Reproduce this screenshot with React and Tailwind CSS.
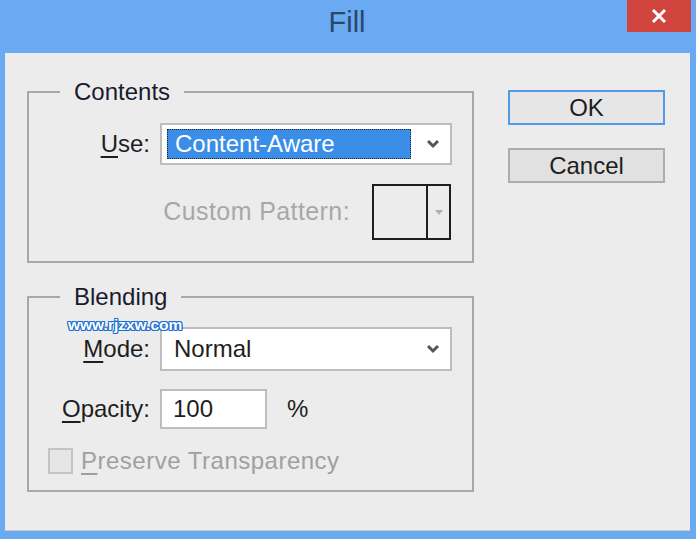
import React from "react";

const font = { fontFamily: '"Liberation Sans", Arial, sans-serif' };

function Chevron({ color = "#555" }) {
  return (
    <svg width="14" height="10" viewBox="0 0 14 10" className="shrink-0">
      <path d="M2 2 L7 7 L12 2" fill="none" stroke={color} strokeWidth="3" />
    </svg>
  );
}

export default function App() {
  return (
    <div
      className="w-[696px] h-[539px] bg-[#6aaaf2] flex flex-col overflow-hidden text-[#1e1e1e]"
      style={font}
    >
      {/* title bar */}
      <div className="relative h-[53px] shrink-0 flex items-center justify-center">
        <span className="text-[29px] text-[#2b4767] -mt-[8px] ml-[-2px]">Fill</span>
        <div className="absolute top-0 right-[5px] w-[64px] h-[32px] bg-[#d0463f] flex items-center justify-center">
          <svg width="16" height="16" viewBox="0 0 16 16">
            <path d="M2 2 L14 14 M14 2 L2 14" stroke="#fff" strokeWidth="3" />
          </svg>
        </div>
      </div>

      {/* client area */}
      <div className="ml-[5px] mr-[6px] h-[478px] bg-[#ececec] border-b border-[#c8c8c8] flex pl-[22px] pt-[27px] text-[24px]">
        <div className="w-[447px] flex flex-col">
          <fieldset className="border-2 border-[#a8a8a8] h-[183px] pt-[19px]">
            <legend className="ml-[31px] px-[14px] leading-[24px] text-[#1a1a2e]">Contents</legend>
            <div className="flex items-center h-[42px]">
              <span className="w-[121px] text-right">
                <span className="underline underline-offset-4">U</span>se:
              </span>
              <div className="ml-[10px] w-[292px] h-[42px] bg-white border-2 border-[#bdbdbd] flex items-center pl-[5px] pr-[10px]">
                <div className="w-[244px] h-[30px] bg-[#3a8ee8] border border-dotted border-[#222] text-white flex items-center pl-[7px]">
                  Content-Aware
                </div>
                <div className="flex-1" />
                <Chevron />
              </div>
            </div>
            <div className="flex items-center mt-[19px]">
              <span className="w-[321px] text-right text-[#a8a8a8] text-[25px] tracking-[0.4px]">Custom Pattern:</span>
              <div className="ml-[22px] w-[79px] h-[56px] border-2 border-[#1e1e1e] flex">
                <div className="w-[54px] border-r-2 border-[#1e1e1e]" />
                <div className="flex-1 flex items-center justify-center">
                  <svg width="8" height="5" viewBox="0 0 8 5">
                    <path d="M0 0 L8 0 L4 5 Z" fill="#b0b0b0" />
                  </svg>
                </div>
              </div>
            </div>
          </fieldset>

          <fieldset className="relative border-2 border-[#a8a8a8] h-[207px] mt-[22px] pt-[18px]">
            <legend className="ml-[31px] px-[14px] leading-[24px] text-[#1a1a2e]">Blending</legend>
            <span
              className="absolute left-[39px] top-[7px] text-[15.5px] leading-[18px] font-bold text-white"
              style={{
                fontFamily: '"Liberation Sans", Arial, sans-serif',
                textShadow:
                  "1px 0 0 #1c6fd1, -1px 0 0 #1c6fd1, 0 1px 0 #1c6fd1, 0 -1px 0 #1c6fd1, 1px 1px 0 #1c6fd1, -1px -1px 0 #1c6fd1, 1px -1px 0 #1c6fd1, -1px 1px 0 #1c6fd1",
              }}
            >
              www.rjzxw.com
            </span>
            <div className="flex items-center h-[44px]">
              <span className="w-[121px] text-right">
                <span className="underline underline-offset-4">M</span>ode:
              </span>
              <div className="ml-[10px] w-[292px] h-[44px] bg-white border-2 border-[#bdbdbd] flex items-center pl-[12px] pr-[10px]">
                <span>Normal</span>
                <div className="flex-1" />
                <Chevron />
              </div>
            </div>
            <div className="flex items-center mt-[18px]">
              <span className="w-[121px] text-right">
                <span className="underline underline-offset-4">O</span>pacity:
              </span>
              <div className="ml-[10px] w-[107px] h-[40px] bg-white border-2 border-[#bdbdbd] flex items-center pl-[11px]">
                100
              </div>
              <span className="ml-[20px]">%</span>
            </div>
            <div className="flex items-center mt-[14px] ml-[19px]">
              <div className="w-[25px] h-[26px] border-2 border-[#c4c4c4] bg-[#e6e6e6]" />
              <span className="ml-[8px] text-[#a0a0a0] tracking-[0.5px]">
                <span className="underline underline-offset-4">P</span>reserve Transparency
              </span>
            </div>
          </fieldset>
        </div>

        <div className="ml-[34px] w-[157px] flex flex-col pt-[10px]">
          <button className="h-[35px] border-2 border-[#4f9be8] bg-[#e6e6e6] text-[24px] leading-none text-[#1e1e1e]">
            OK
          </button>
          <button className="mt-[23px] h-[35px] border-2 border-[#adadad] bg-[#e1e1e1] text-[24px] leading-none text-[#1e1e1e]">
            Cancel
          </button>
        </div>
      </div>
    </div>
  );
}
